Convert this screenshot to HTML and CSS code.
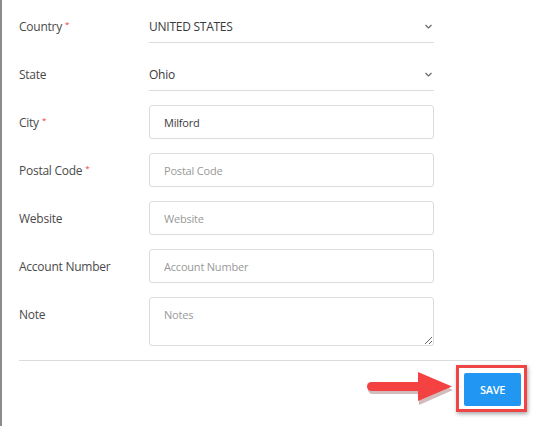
FILE: index.html
```html
<!DOCTYPE html>
<html>
<head>
<meta charset="utf-8">
<link rel="stylesheet" href="styles.css">
</head>
<body>
<div class="modal">
  <div class="form">
    <div class="row">
      <label class="label">Country<span class="req">*</span></label>
      <div class="select"><span>UNITED STATES</span><svg class="chev" width="7" height="5" viewBox="0 0 7 5"><path d="M0.5 1 L3.5 4 L6.5 1" fill="none" stroke="#666" stroke-width="1.2"/></svg></div>
    </div>
    <div class="row">
      <label class="label">State</label>
      <div class="select"><span>Ohio</span><svg class="chev" width="7" height="5" viewBox="0 0 7 5"><path d="M0.5 1 L3.5 4 L6.5 1" fill="none" stroke="#666" stroke-width="1.2"/></svg></div>
    </div>
    <div class="row">
      <label class="label">City<span class="req">*</span></label>
      <input class="input" type="text" value="Milford">
    </div>
    <div class="row">
      <label class="label">Postal Code<span class="req">*</span></label>
      <input class="input" type="text" placeholder="Postal Code">
    </div>
    <div class="row">
      <label class="label">Website</label>
      <input class="input" type="text" placeholder="Website">
    </div>
    <div class="row">
      <label class="label">Account Number</label>
      <input class="input" type="text" placeholder="Account Number">
    </div>
    <div class="row">
      <label class="label">Note</label>
      <textarea class="input area" placeholder="Notes"></textarea>
    </div>
  </div>
  <div class="footer">
    <svg class="arrow" width="92" height="36" viewBox="0 0 92 36">
      <g transform="translate(0,2)" fill="#9a6a6a" opacity="0.45">
        <rect x="5" y="11" width="60" height="9" rx="4.5"/>
        <polygon points="56,1 90,16 56,31"/>
      </g>
      <g fill="#f44242">
        <rect x="4" y="10" width="60" height="9" rx="4.5"/>
        <polygon points="55,0 89,14.5 55,29"/>
      </g>
    </svg>
    <div class="save-wrap">
      <button class="save">SAVE</button>
    </div>
  </div>
</div>
</body>
</html>
```
FILE: styles.css
```css
* { box-sizing: border-box; }
html, body {
  margin: 0;
  padding: 0;
  background: #fff;
  font-family: "Open Sans", "Noto Sans", sans-serif;
  font-size: 12px;
  color: #444;
}
.modal {
  width: 535px;
  height: 426px;
  border-left: 2px solid #8c8c8c;
  padding: 9px 14px 0 17px;
}
.form {
  display: flex;
  flex-direction: column;
  gap: 14px;
}
.row {
  display: grid;
  grid-template-columns: 130px 285px;
  align-items: start;
}
.label {
  display: block;
  height: 34px;
  line-height: 34px;
  padding-top: 1px;
  color: #4a4a4a;
  letter-spacing: -0.25px;
  white-space: nowrap;
}
.req {
  position: relative;
  top: -4px;
  color: #f23a3a;
  font-size: 8px;
  line-height: 0;
  margin-left: 3px;
}
.select {
  height: 34px;
  border-bottom: 1px solid #dcdcdc;
  display: flex;
  align-items: center;
  justify-content: space-between;
  color: #3a3a3a;
  padding-top: 2px;
  padding-right: 2px;
  letter-spacing: -0.25px;
}
.chev { margin-top: -1px; }
.input {
  display: block;
  width: 285px;
  height: 34px;
  border: 1px solid #dcdcdc;
  border-radius: 3px;
  padding: 0 14px;
  font-family: inherit;
  font-size: 11px;
  color: #3a3a3a;
  outline: none;
  background: #fff;
  letter-spacing: -0.2px;
  margin: 0;
}
.input::placeholder { color: #999; }
.area {
  height: 49px;
  padding-top: 9px;
  resize: vertical;
}
.footer {
  margin-top: 14px;
  border-top: 1px solid #dcdcdc;
  display: flex;
  justify-content: flex-end;
  align-items: center;
  padding-top: 10px;
}
.arrow {
  margin-right: 9px;
  margin-top: 1px;
}
.save-wrap {
  position: relative;
}
.save-wrap::after {
  content: "";
  position: absolute;
  left: -8px;
  top: -8px;
  right: -6px;
  bottom: -6px;
  border: 3px solid #f04545;
  box-shadow: 1px 2px 4px rgba(0,0,0,0.35);
  pointer-events: none;
}
.save {
  display: block;
  width: 57px;
  height: 33px;
  border: none;
  border-radius: 2px;
  background: #2196f3;
  color: #fff;
  font-family: inherit;
  font-weight: 600;
  font-size: 11px;
  letter-spacing: -0.3px;
}
```
